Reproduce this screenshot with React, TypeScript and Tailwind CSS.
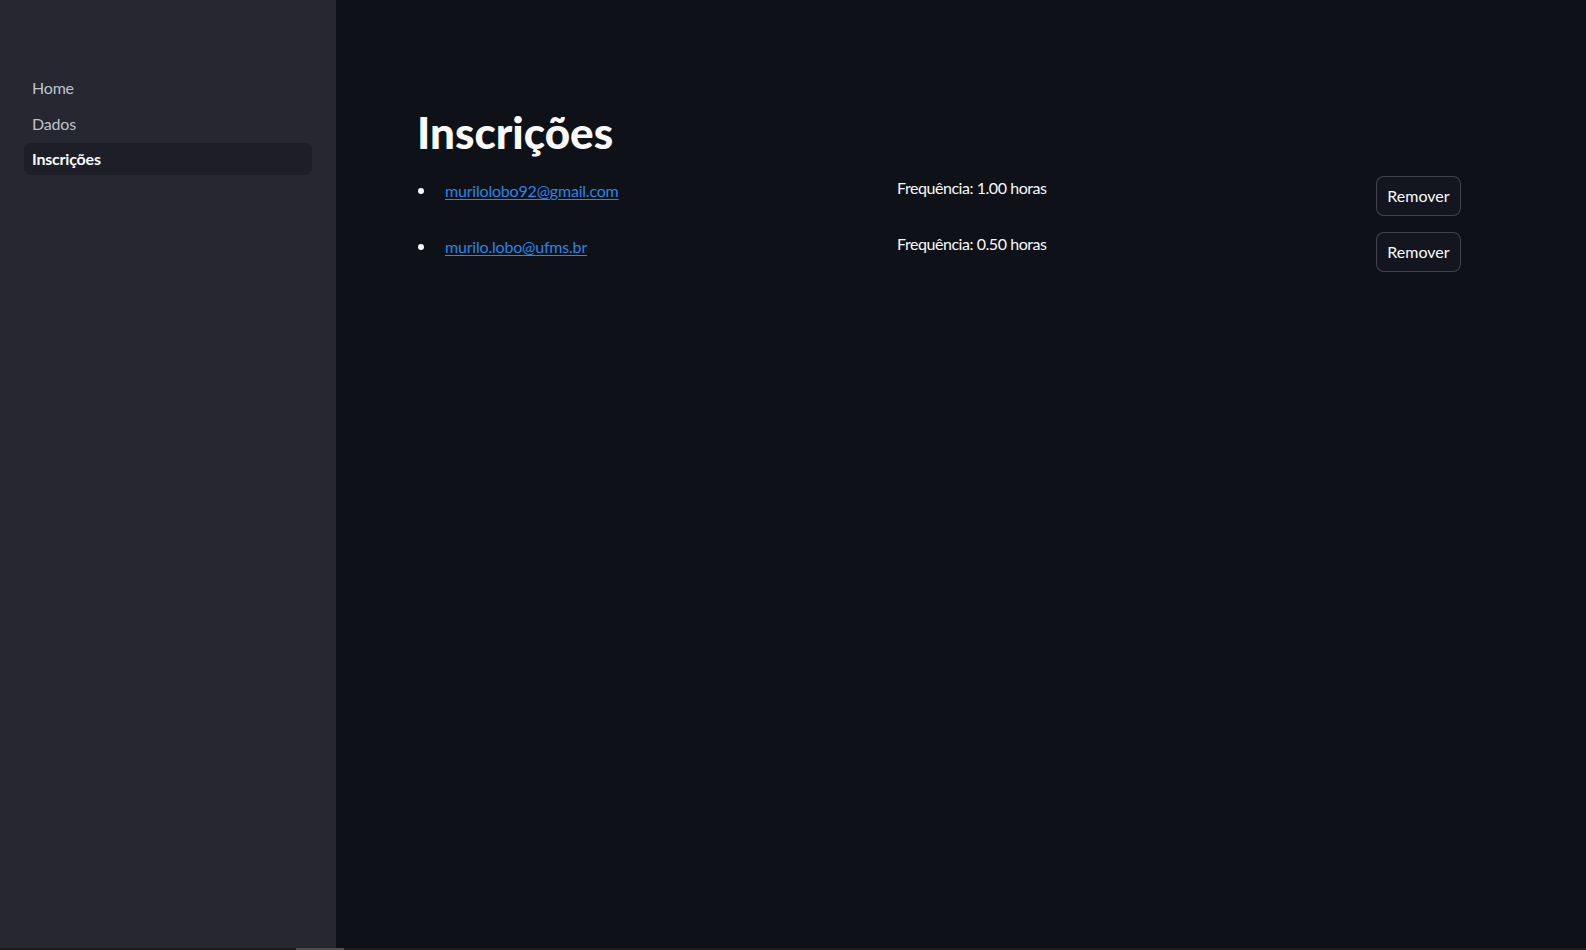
import React from "react";

const font = { fontFamily: "Lato, 'Noto Sans', sans-serif" };

function Row({ email, freq }: { email: string; freq: string }) {
  return (
    <div className="grid grid-cols-[464px_463px_1fr] gap-4 h-[56px]">
      <div className="flex items-start pt-[3px]">
        <div className="flex items-center h-[24px]">
          <span className="ml-[1px] w-[6px] h-[6px] rounded-full bg-[#fafafa]" />
          <a href="#" className="ml-[21px] text-[16px] leading-[24px] tracking-[-0.2px] text-[#2a85ea] underline underline-offset-2">
            {email}
          </a>
        </div>
      </div>
      <div className="pt-[0px] text-[16px] leading-[24px] tracking-[-0.45px] text-[#fafafa]">{freq}</div>
      <div>
        <button className="h-[40px] w-[85px] rounded-[8px] border border-[rgba(250,250,250,0.2)] bg-[#13161e] text-[16px] text-[#fafafa]">
          Remover
        </button>
      </div>
    </div>
  );
}

export default function App() {
  return (
    <div className="flex h-[950px] w-[1586px] flex-col bg-[#0e1117] overflow-hidden" style={font}>
      <div className="flex h-[948px]">
        <aside className="w-[336px] shrink-0 bg-[#262730] pt-[72px] px-[24px]">
          <nav className="flex flex-col gap-[3.5px] w-[288px]">
            <div className="h-[32px] flex items-center px-[8px] text-[16px] text-[#bfc3cc] tracking-[-0.2px]">Home</div>
            <div className="h-[32px] flex items-center px-[8px] text-[16px] text-[#bfc3cc] tracking-[-0.2px]">Dados</div>
            <div className="h-[32px] flex items-center px-[8px] text-[16px] font-bold text-[#fafafa] rounded-[6px] bg-[#1d1e26] tracking-[-0.2px]">
              Inscrições
            </div>
          </nav>
        </aside>
        <main className="flex-1 pl-[81px] pt-[102px]">
          <h1 className="text-[44px] leading-[60px] font-black text-[#fafafa]">Inscrições</h1>
          <div className="mt-[14px] flex flex-col">
            <Row email="murilolobo92@gmail.com" freq="Frequência: 1.00 horas" />
            <Row email="murilo.lobo@ufms.br" freq="Frequência: 0.50 horas" />
          </div>
        </main>
      </div>
      <div className="h-[2px] bg-[#1b1c1e] flex">
        <div className="ml-[296px] w-[48px] h-[2px] bg-[#4b4c4e]" />
      </div>
    </div>
  );
}
